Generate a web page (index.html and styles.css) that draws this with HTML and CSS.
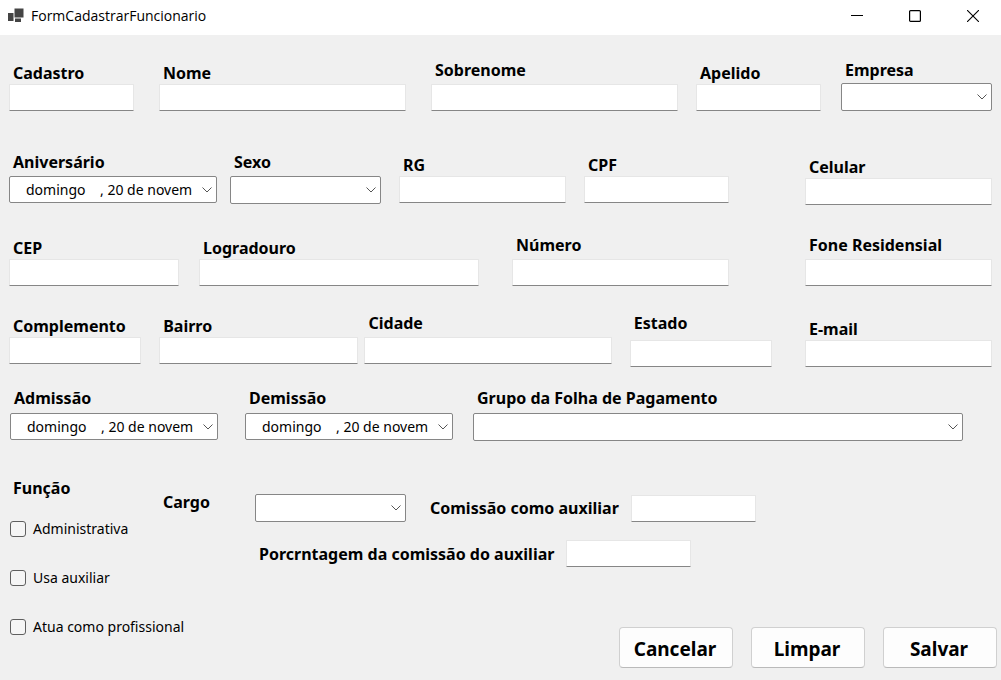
FILE: index.html
```html
<!DOCTYPE html>
<html lang="pt-BR">
<head>
<meta charset="utf-8">
<meta name="viewport" content="width=device-width, initial-scale=1">
<title>FormCadastrarFuncionario</title>
<link rel="stylesheet" href="styles.css">
</head>
<body>
<svg class="defs" aria-hidden="true">
  <symbol id="chevron" viewBox="0 0 10 6"><path d="M0.5 0.5 5 5 9.5 0.5" fill="none" stroke="#555" stroke-width="1"/></symbol>
</svg>

<header class="titlebar">
  <svg class="app-icon" viewBox="0 0 16 16" aria-hidden="true">
    <rect x="0" y="5" width="5.500" height="8" fill="#444"/>
    <rect x="6.500" y="0.500" width="9" height="9" fill="#444"/>
    <rect x="7" y="10.500" width="6" height="3.500" fill="#444"/>
  </svg>
  <h1 class="title">FormCadastrarFuncionario</h1>
  <div class="window-controls">
    <button type="button" class="window-button" aria-label="Minimizar"><svg viewBox="0 0 12 12"><path d="M0 5.500H12" stroke="#000" fill="none"/></svg></button>
    <button type="button" class="window-button" aria-label="Maximizar"><svg viewBox="0 0 12 12"><rect x="0.600" y="0.600" width="10.800" height="10.800" rx="1" stroke="#000" stroke-width="1.200" fill="none"/></svg></button>
    <button type="button" class="window-button" aria-label="Fechar"><svg viewBox="0 0 12 12"><path d="M0 0 12 12M12 0 0 12" stroke="#000" stroke-width="1.100" fill="none"/></svg></button>
  </div>
</header>

<form class="form">
  <div class="row row-identity">
    <div class="field tight w-code"><label for="cadastro">Cadastro</label><input class="box" id="cadastro" type="text"></div>
    <div class="field tight w-name"><label for="nome">Nome</label><input class="box" id="nome" type="text"></div>
    <div class="field w-name"><label for="sobrenome">Sobrenome</label><input class="box" id="sobrenome" type="text"></div>
    <div class="field tight w-code"><label for="apelido">Apelido</label><input class="box" id="apelido" type="text"></div>
    <div class="field combo-field w-combo"><label for="empresa">Empresa</label><div class="combo"><select id="empresa"><option></option></select><svg><use href="#chevron"/></svg></div></div>
  </div>

  <div class="details">
    <div class="details-main">
      <div class="row row-personal">
        <div class="field w-date"><label for="aniversario">Aniversário</label><div class="combo date"><select id="aniversario"><option>domingo&nbsp;&nbsp;&nbsp;&nbsp;, 20 de novem</option></select><svg><use href="#chevron"/></svg></div></div>
        <div class="field w-combo"><label for="sexo">Sexo</label><div class="combo"><select id="sexo"><option></option></select><svg><use href="#chevron"/></svg></div></div>
        <div class="field tight w-rg"><label for="rg">RG</label><input class="box" id="rg" type="text"></div>
        <div class="field tight w-cpf"><label for="cpf">CPF</label><input class="box" id="cpf" type="text"></div>
      </div>
      <div class="row row-address">
        <div class="field tight w-cep"><label for="cep">CEP</label><input class="box" id="cep" type="text"></div>
        <div class="field tight w-street"><label for="logradouro">Logradouro</label><input class="box" id="logradouro" type="text"></div>
        <div class="field w-number"><label for="numero">Número</label><input class="box" id="numero" type="text"></div>
      </div>
      <div class="row row-city">
        <div class="field tight w-complement"><label for="complemento">Complemento</label><input class="box" id="complemento" type="text"></div>
        <div class="field tight w-district"><label for="bairro">Bairro</label><input class="box" id="bairro" type="text"></div>
        <div class="field w-name"><label for="cidade">Cidade</label><input class="box" id="cidade" type="text"></div>
        <div class="field airy w-state"><label for="estado">Estado</label><input class="box" id="estado" type="text"></div>
      </div>
    </div>
    <div class="details-contact">
      <div class="field tight"><label for="celular">Celular</label><input class="box" id="celular" type="text"></div>
      <div class="field"><label for="fone">Fone Residensial</label><input class="box" id="fone" type="text"></div>
      <div class="field tight"><label for="email">E-mail</label><input class="box" id="email" type="text"></div>
    </div>
  </div>

  <div class="row row-contract">
    <div class="field w-date"><label for="admissao">Admissão</label><div class="combo date"><select id="admissao"><option>domingo&nbsp;&nbsp;&nbsp;&nbsp;, 20 de novem</option></select><svg><use href="#chevron"/></svg></div></div>
    <div class="field w-date"><label for="demissao">Demissão</label><div class="combo date"><select id="demissao"><option>domingo&nbsp;&nbsp;&nbsp;&nbsp;, 20 de novem</option></select><svg><use href="#chevron"/></svg></div></div>
    <div class="field w-group"><label for="grupo">Grupo da Folha de Pagamento</label><div class="combo"><select id="grupo"><option></option></select><svg><use href="#chevron"/></svg></div></div>
  </div>

  <div class="role">
    <fieldset class="functions">
      <legend>Função</legend>
      <label class="check"><input type="checkbox">Administrativa</label>
      <label class="check"><input type="checkbox">Usa auxiliar</label>
      <label class="check"><input type="checkbox">Atua como profissional</label>
    </fieldset>
    <div class="commission">
      <div class="line">
        <label class="cargo" for="cargo">Cargo</label>
        <div class="combo"><select id="cargo"><option></option></select><svg><use href="#chevron"/></svg></div>
        <label for="comissao">Comissão como auxiliar</label>
        <input class="box" id="comissao" type="text">
      </div>
      <div class="line percent">
        <label for="porcentagem">Porcrntagem da comissão do auxiliar</label>
        <input class="box" id="porcentagem" type="text">
      </div>
      <div class="actions">
        <button type="button">Cancelar</button>
        <button type="button">Limpar</button>
        <button type="submit">Salvar</button>
      </div>
    </div>
  </div>
</form>
</body>
</html>
```
FILE: styles.css
```css
* {
  box-sizing: border-box;
}

body {
  margin: 0;
  min-height: 100vh;
  background: #f0f0f0;
  color: #000;
  font: 14px/20px "Noto Sans", "Open Sans", sans-serif;
}

.defs {
  position: absolute;
  width: 0;
  height: 0;
}

.titlebar {
  display: flex;
  align-items: center;
  height: 35px;
  padding: 0 5px 3px 8px;
  background: #fff;
}

.app-icon {
  width: 16px;
  height: 16px;
}

.title {
  margin: 0 auto 0 7px;
  font: 400 14px/20px "Open Sans", "Noto Sans", sans-serif;
}

.window-controls {
  display: flex;
  gap: 12px;
}

.window-button {
  display: flex;
  align-items: center;
  justify-content: center;
  width: 46px;
  height: 30px;
  padding: 0;
  border: 0;
  background: none;
}

.window-button svg {
  width: 12px;
  height: 12px;
}

.form {
  padding: 25px 0 12px;
}

.row {
  display: flex;
  align-items: flex-start;
}

.field {
  display: flex;
  flex-direction: column;
  gap: 4px;
  min-width: 0;
}

.field label,
.line label,
.functions legend {
  padding-left: 4px;
  font-size: 16px;
  font-weight: 700;
  white-space: nowrap;
}

.tight {
  margin-top: 3px;
  gap: 1px;
}

.combo-field {
  gap: 3px;
}

.airy {
  gap: 7px;
}

.box {
  width: 100%;
  height: 27px;
  padding: 0 4px;
  border: 1px solid #e6e6e6;
  border-bottom-color: #868686;
  border-radius: 1px;
  background: #fff;
  font: inherit;
}

.combo {
  position: relative;
  height: 28px;
}

.date {
  height: 27px;
}

.combo select {
  display: block;
  width: 100%;
  height: 100%;
  padding: 0 18px 0 16px;
  border: 1px solid #868686;
  border-radius: 2px;
  background: #fff;
  color: #000;
  font: inherit;
  appearance: none;
}

.combo svg {
  position: absolute;
  top: 11px;
  right: 5px;
  width: 10px;
  height: 6px;
  pointer-events: none;
}

.w-code { flex: 125 1 0; }
.w-name { flex: 247 1 0; }
.w-combo { flex: 151 1 0; }
.w-date { flex: 208 1 0; }
.w-rg { flex: 167 1 0; }
.w-cpf { flex: 145 1 0; }
.w-cep { flex: 170 1 0; }
.w-street { flex: 280 1 0; }
.w-number { flex: 217 1 0; }
.w-complement { flex: 132 1 0; }
.w-district { flex: 199 1 0; }
.w-state { flex: 142 1 0; }
.w-group { flex: 490 1 0; }

.row-identity {
  gap: 20px;
  padding: 0 9px;
}

.row-identity .w-name {
  margin-left: 5px;
}

.row-identity .w-name + .w-code {
  margin-left: -2px;
}

.details {
  display: flex;
  gap: 33px;
  margin-top: 41px;
  padding: 0 9px;
}

.details-main {
  flex: 763 1 0;
}

.details-contact {
  display: flex;
  flex: 187 1 0;
  flex-direction: column;
  gap: 30px;
  padding-top: 2px;
}

.row-personal {
  gap: 18px;
  padding-right: 43px;
}

.row-personal .w-combo {
  margin-left: -5px;
}

.row-address {
  gap: 20px;
  margin-top: 31px;
  padding-right: 43px;
}

.row-address .w-number {
  margin-left: 13px;
}

.row-city {
  gap: 18px;
  margin-top: 27px;
}

.row-city .w-name {
  margin-left: -12px;
}

.row-contract {
  gap: 20px;
  margin-top: 21px;
  padding: 0 38px 0 10px;
}

.row-contract .field {
  gap: 5px;
}

.row-contract .w-date + .w-date {
  margin-left: 7px;
}

.role {
  display: flex;
  margin-top: 37px;
  padding: 0 4px 0 9px;
}

.functions {
  flex: none;
  width: 150px;
  min-width: 0;
  margin: 0;
  padding: 0;
  border: 0;
}

.check {
  display: flex;
  align-items: center;
  gap: 7px;
  margin-bottom: 29px;
  padding-left: 1px;
  white-space: nowrap;
}

.functions legend {
  margin-bottom: 21px;
}

.check input {
  flex: none;
  width: 16px;
  height: 16px;
  margin: 0;
  border: 1px solid #5f5f5f;
  border-radius: 3px;
  background: #f5f5f5;
  appearance: none;
}

.check input:checked {
  background: #005fb8;
}

.commission {
  display: flex;
  flex: 1;
  flex-direction: column;
  padding-top: 16px;
}

.line {
  display: flex;
  align-items: center;
}

.line .cargo {
  align-self: flex-start;
  width: 96px;
  line-height: 16px;
}

.line .combo {
  width: 151px;
  margin-right: 20px;
}

.line .box {
  width: 125px;
  margin-left: 12px;
}

.percent {
  margin-top: 18px;
  padding-left: 96px;
}

.actions {
  display: flex;
  justify-content: flex-end;
  gap: 18px;
  margin-top: 60px;
}

.actions button {
  width: 114px;
  height: 41px;
  padding: 2px 2px 0 0;
  border: 1px solid #d0d0d0;
  border-bottom-color: #bababa;
  border-radius: 4px;
  background: #fdfdfd;
  color: #000;
  font: 700 19px/24px "Noto Sans", "Open Sans", sans-serif;
}
```
